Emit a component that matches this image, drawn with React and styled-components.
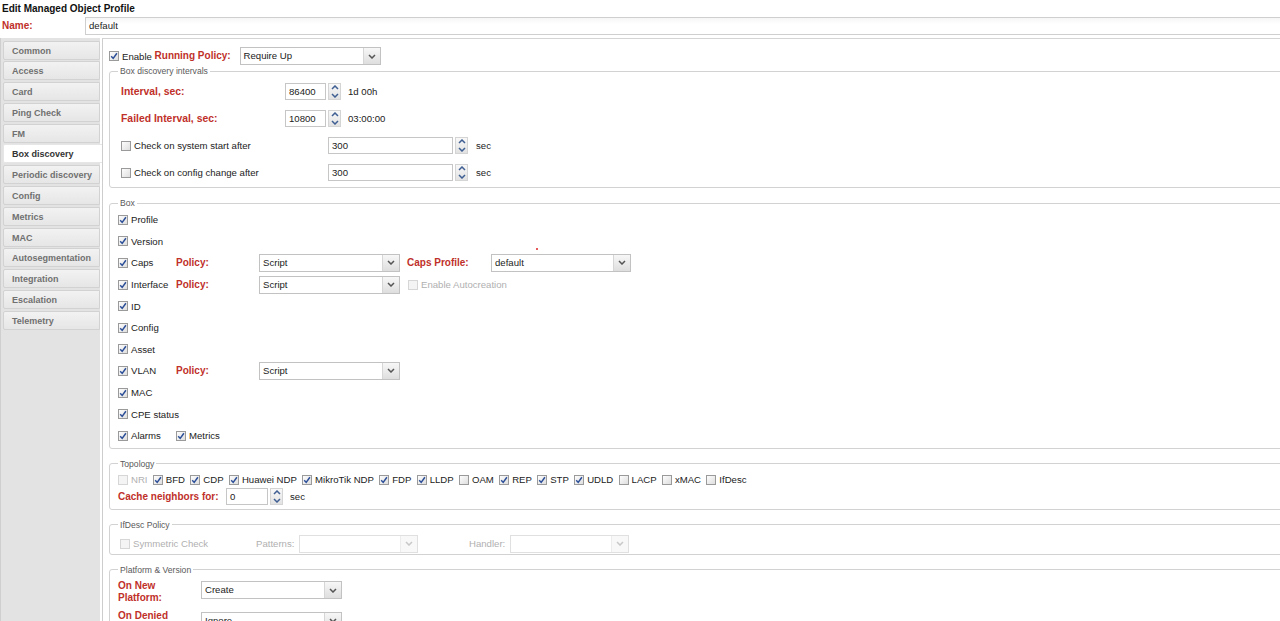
import React from "react";
import styled, { createGlobalStyle } from "styled-components";

const GlobalStyle = createGlobalStyle`
  html, body {
    margin: 0;
    padding: 0;
    background: #fff;
    overflow: hidden;
  }
  body {
    font-family: "Liberation Sans", Arial, sans-serif;
    font-size: 9.6px;
    color: #222;
  }
`;

const Page = styled.div`
  width: 1280px;
  height: 621px;
  overflow: hidden;
`;

const Title = styled.div`
  height: 17px;
  line-height: 17px;
  padding-left: 2px;
  font-weight: bold;
  font-size: 10px;
  color: #111;
`;

const NameRow = styled.div`
  display: flex;
  align-items: center;
  height: 18px;
  margin-bottom: 3px;
`;

const RedLabel = styled.span`
  color: #c0302a;
  font-weight: bold;
  font-size: ${({ $big }) => ($big ? "10.4px" : "10px")};
  width: ${({ $w }) => ($w ? `${$w}px` : "auto")};
  flex-shrink: 0;
  line-height: 12px;
`;

const NameLabel = styled(RedLabel)`
  padding-left: 2px;
  width: 83px;
`;

const NameInput = styled.div`
  flex: 1;
  height: 16px;
  line-height: 16px;
  border: 1px solid #cfcfcf;
  border-right: none;
  background: linear-gradient(#f6f6f6, #fff 40%);
  padding-left: 3px;
  font-size: 9.6px;
`;

const Main = styled.div`
  display: flex;
  height: 583px;
`;

const Sidebar = styled.div`
  width: 100px;
  flex-shrink: 0;
  background: #e3e3e3;
  border-left: 1px solid #cfcfcf;
  padding: 2.5px 0 0 2px;
  display: flex;
  flex-direction: column;
  gap: 1.8px;
  box-sizing: border-box;
`;

const Tab = styled.div`
  height: 19px;
  line-height: 18px;
  width: ${({ $active }) => ($active ? "99px" : "97px")};
  box-sizing: border-box;
  padding-left: 8px;
  font-weight: bold;
  font-size: 9px;
  color: ${({ $active }) => ($active ? "#333" : "#707070")};
  background: ${({ $active }) =>
    $active ? "#fff" : "linear-gradient(#f2f2f2, #e6e6e6)"};
  border: 1px solid ${({ $active }) => ($active ? "#e6e6e6" : "#d2d2d2")};
  border-right: ${({ $active }) => ($active ? "none" : "1px solid #d2d2d2")};
  border-radius: 2px 0 0 2px;
  white-space: nowrap;
`;

const Content = styled.div`
  flex: 1;
  margin-left: 2px;
  border-left: 1px solid #cdcdcd;
  border-top: 1px solid #d4d4d4;
  padding: 8px 0 0 6px;
  display: flex;
  flex-direction: column;
  gap: 9px;
  overflow: hidden;
  min-width: 0;
`;

const Row = styled.div`
  display: flex;
  align-items: ${({ $top }) => ($top ? "flex-start" : "center")};
  height: ${({ $h }) => ($h ? `${$h}px` : "auto")};
  gap: ${({ $gap }) => ($gap ? `${$gap}px` : "0")};
  flex-shrink: 0;
`;

const TopRow = styled(Row)`
  margin-bottom: -9px;
`;

const Fieldset = styled.fieldset`
  margin: 0 -40px 0 0;
  border: 1px solid #d2d2d2;
  border-radius: 3px;
  padding: ${({ $pt }) => $pt || 0}px 0 ${({ $pb }) => $pb || 0}px ${({ $pl }) => $pl}px;
  min-width: 0;
  flex-shrink: 0;
`;

const Legend = styled.legend`
  font-size: 8.6px;
  line-height: 12px;
  color: #5a5a5a;
  padding: 0 2px;
  margin-left: ${({ $pl }) => 8 - $pl}px;
`;

const Text = styled.span`
  color: ${({ $disabled }) => ($disabled ? "#b0b0b0" : "#222")};
  white-space: nowrap;
  flex-shrink: 0;
`;

const GreyLabel = styled.span`
  color: #b0b0b0;
  width: ${({ $w }) => $w}px;
  flex-shrink: 0;
  margin-left: ${({ $ml }) => ($ml ? `${$ml}px` : "0")};
`;

const CheckBox = styled.span`
  width: 10px;
  height: 10px;
  box-sizing: border-box;
  flex-shrink: 0;
  border: 1px solid ${({ $disabled }) => ($disabled ? "#d6d6d6" : "#9a9a9a")};
  background: ${({ $disabled }) =>
    $disabled ? "#f4f4f4" : "linear-gradient(135deg, #fdfdfd, #dedede)"};
  display: inline-flex;
  align-items: center;
  justify-content: center;
`;

const CheckItem = styled.span`
  display: inline-flex;
  align-items: center;
  gap: 3px;
  width: ${({ $w }) => ($w ? `${$w}px` : "auto")};
  flex-shrink: 0;
`;

const Check = ({ on, disabled }) => (
  <CheckBox $disabled={disabled}>
    {on && (
      <svg width="8" height="8" viewBox="0 0 8 8">
        <path d="M1.2 4.2 L3.2 6.4 L6.9 1.2" fill="none" stroke="#2c4f98" strokeWidth="1.5" />
      </svg>
    )}
  </CheckBox>
);

const Option = ({ on, disabled, w, children }) => (
  <CheckItem $w={w}>
    <Check on={on} disabled={disabled} />
    <Text $disabled={disabled}>{children}</Text>
  </CheckItem>
);

const ComboBox = styled.div`
  position: relative;
  display: flex;
  width: ${({ $w }) => $w}px;
  height: 18px;
  box-sizing: border-box;
  border: 1px solid ${({ $disabled }) => ($disabled ? "#e0e0e0" : "#c2c2c2")};
  background: #fff;
  flex-shrink: 0;
  margin-left: ${({ $ml }) => ($ml ? `${$ml}px` : "0")};
  margin-top: ${({ $mt }) => ($mt ? `${$mt}px` : "0")};
`;

const ComboText = styled.span`
  flex: 1;
  padding-left: 3px;
  line-height: 16px;
  white-space: nowrap;
  overflow: hidden;
`;

const Trigger = styled.span`
  width: 16px;
  border-left: 1px solid ${({ $disabled }) => ($disabled ? "#ececec" : "#d6d6d6")};
  background: ${({ $disabled }) =>
    $disabled ? "#f8f8f8" : "linear-gradient(#f7f7f7, #dedede)"};
  display: flex;
  align-items: center;
  justify-content: center;
`;

const Combo = ({ w, value, disabled, ml, mt, children }) => (
  <ComboBox $w={w} $disabled={disabled} $ml={ml} $mt={mt}>
    <ComboText>{value}</ComboText>
    <Trigger $disabled={disabled}>
      <svg width="8" height="5" viewBox="0 0 8 5">
        <path d="M1 1 L4 4 L7 1" fill="none" stroke={disabled ? "#c8c8c8" : "#555"} strokeWidth="1.5" />
      </svg>
    </Trigger>
    {children}
  </ComboBox>
);

const RequiredDot = styled.span`
  position: absolute;
  left: 44px;
  top: -7px;
  width: 2px;
  height: 2px;
  border-radius: 50%;
  background: #d22;
`;

const SpinInput = styled.div`
  width: ${({ $w }) => $w}px;
  height: 17px;
  box-sizing: border-box;
  border: 1px solid #c6c6c6;
  line-height: 15px;
  padding-left: 3px;
  flex-shrink: 0;
`;

const SpinButtons = styled.span`
  width: 13px;
  height: 17px;
  margin-left: 2px;
  box-sizing: border-box;
  border: 1px solid #d4d4d4;
  background: linear-gradient(#f8f8f8, #e2e2e2);
  display: flex;
  flex-direction: column;
  align-items: center;
  justify-content: space-around;
  flex-shrink: 0;
`;

const Unit = styled.span`
  margin-left: ${({ $ml }) => $ml}px;
  white-space: nowrap;
`;

const Spinner = ({ w, value, unit, unitGap = 7 }) => (
  <>
    <SpinInput $w={w}>{value}</SpinInput>
    <SpinButtons>
      <svg width="8" height="5" viewBox="0 0 8 5">
        <path d="M1 4 L4 1 L7 4" fill="none" stroke="#3f5f93" strokeWidth="1.5" />
      </svg>
      <svg width="8" height="5" viewBox="0 0 8 5">
        <path d="M1 1 L4 4 L7 1" fill="none" stroke="#3f5f93" strokeWidth="1.5" />
      </svg>
    </SpinButtons>
    <Unit $ml={unitGap}>{unit}</Unit>
  </>
);

const tabs = [
  "Common",
  "Access",
  "Card",
  "Ping Check",
  "FM",
  "Box discovery",
  "Periodic discovery",
  "Config",
  "Metrics",
  "MAC",
  "Autosegmentation",
  "Integration",
  "Escalation",
  "Telemetry",
];

const topology = [
  ["NRI", false, true],
  ["BFD", true],
  ["CDP", true],
  ["Huawei NDP", true],
  ["MikroTik NDP", true],
  ["FDP", true],
  ["LLDP", true],
  ["OAM", false],
  ["REP", true],
  ["STP", true],
  ["UDLD", true],
  ["LACP", false],
  ["xMAC", false],
  ["IfDesc", false],
];

const BoxRow = styled(Row)`
  height: 21.6px;
`;

const App = () => (
  <Page>
    <GlobalStyle />
    <Title>Edit Managed Object Profile</Title>
    <NameRow>
      <NameLabel>Name:</NameLabel>
      <NameInput>default</NameInput>
    </NameRow>
    <Main>
      <Sidebar>
        {tabs.map((t) => (
          <Tab key={t} $active={t === "Box discovery"}>
            {t}
          </Tab>
        ))}
      </Sidebar>
      <Content>
        <TopRow $h={18}>
          <Check on />
          <Text style={{ marginLeft: 3 }}>Enable&nbsp;</Text>
          <RedLabel $w={85}>Running Policy:</RedLabel>
          <Combo w={141} value="Require Up" />
        </TopRow>

        <Fieldset $pl={11} $pt={1} $pb={1}>
          <Legend $pl={11}>Box discovery intervals</Legend>
          <Row $h={27}>
            <RedLabel $w={164} $big>Interval, sec:</RedLabel>
            <Spinner w={41} value="86400" unit="1d 00h" />
          </Row>
          <Row $h={27}>
            <RedLabel $w={164} $big>Failed Interval, sec:</RedLabel>
            <Spinner w={41} value="10800" unit="03:00:00" />
          </Row>
          <Row $h={27}>
            <Option w={207}>Check on system start after</Option>
            <Spinner w={125} value="300" unit="sec" unitGap={8} />
          </Row>
          <Row $h={27}>
            <Option w={207}>Check on config change after</Option>
            <Spinner w={125} value="300" unit="sec" unitGap={8} />
          </Row>
        </Fieldset>

        <Fieldset $pl={8} $pb={1}>
          <Legend $pl={8}>Box</Legend>
          <BoxRow>
            <Option on>Profile</Option>
          </BoxRow>
          <BoxRow>
            <Option on>Version</Option>
          </BoxRow>
          <BoxRow>
            <Option on w={58}>Caps</Option>
            <RedLabel $w={83}>Policy:</RedLabel>
            <Combo w={141} value="Script" />
            <RedLabel $w={84} style={{ marginLeft: 7 }}>Caps Profile:</RedLabel>
            <Combo w={140} value="default">
              <RequiredDot />
            </Combo>
          </BoxRow>
          <BoxRow>
            <Option on w={58}>Interface</Option>
            <RedLabel $w={83}>Policy:</RedLabel>
            <Combo w={141} value="Script" />
            <span style={{ width: 8 }} />
            <Option disabled>Enable Autocreation</Option>
          </BoxRow>
          <BoxRow>
            <Option on>ID</Option>
          </BoxRow>
          <BoxRow>
            <Option on>Config</Option>
          </BoxRow>
          <BoxRow>
            <Option on>Asset</Option>
          </BoxRow>
          <BoxRow>
            <Option on w={58}>VLAN</Option>
            <RedLabel $w={83}>Policy:</RedLabel>
            <Combo w={141} value="Script" />
          </BoxRow>
          <BoxRow>
            <Option on>MAC</Option>
          </BoxRow>
          <BoxRow>
            <Option on>CPE status</Option>
          </BoxRow>
          <BoxRow>
            <Option on w={58}>Alarms</Option>
            <Option on>Metrics</Option>
          </BoxRow>
        </Fieldset>

        <Fieldset $pl={8} $pt={2} $pb={3}>
          <Legend $pl={8}>Topology</Legend>
          <Row $h={16} $gap={5.3}>
            {topology.map(([label, on, disabled]) => (
              <Option key={label} on={on} disabled={disabled}>
                {label}
              </Option>
            ))}
          </Row>
          <Row $h={18}>
            <RedLabel $w={108}>Cache neighbors for:</RedLabel>
            <Spinner w={42} value="0" unit="sec" />
          </Row>
        </Fieldset>

        <Fieldset $pl={10} $pt={4} $pb={1}>
          <Legend $pl={10}>IfDesc Policy</Legend>
          <Row $h={18}>
            <Option disabled w={136}>Symmetric Check</Option>
            <GreyLabel $w={43}>Patterns:</GreyLabel>
            <Combo w={119} disabled />
            <GreyLabel $w={41} $ml={51}>Handler:</GreyLabel>
            <Combo w={119} disabled />
          </Row>
        </Fieldset>

        <Fieldset $pl={8} $pt={4} $pb={4}>
          <Legend $pl={8}>Platform &amp; Version</Legend>
          <Row $top>
            <RedLabel $w={83}>
              On New
              <br />
              Platform:
            </RedLabel>
            <Combo w={141} value="Create" mt={1.5} />
          </Row>
          <Row $top style={{ marginTop: 6 }}>
            <RedLabel $w={83}>On Denied</RedLabel>
            <Combo w={141} value="Ignore" mt={2} />
          </Row>
        </Fieldset>
      </Content>
    </Main>
  </Page>
);

export default App;
